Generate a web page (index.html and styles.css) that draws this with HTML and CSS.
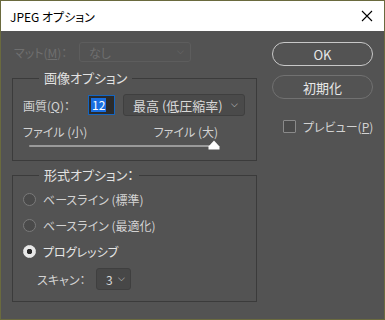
FILE: index.html
```html
<!DOCTYPE html>
<html lang="ja">
<head>
<meta charset="utf-8">
<link rel="stylesheet" href="styles.css">
</head>
<body>
<div class="window">
  <div class="titlebar">
    <span class="title">JPEG オプション</span>
    <svg class="close" width="12" height="12" viewBox="0 0 12 12"><path d="M1 1L11 11M11 1L1 11" stroke="#000" stroke-width="1.1" fill="none"/></svg>
  </div>
  <div class="body">
    <div class="left">
      <div class="matte-row">
        <span class="matte-label">マット(<u>M</u>)：</span>
        <div class="select disabled"><span>なし</span><span class="chev">⌵</span></div>
      </div>
      <fieldset class="group g1">
        <legend>画像オプション</legend>
        <div class="quality-row">
          <span class="qlabel">画質(<u>Q</u>)：</span>
          <div class="qinput"><span class="sel">12</span></div>
          <div class="select qsel"><span>最高 (低圧縮率)</span><span class="chev">⌵</span></div>
        </div>
        <div class="slider-labels"><span>ファイル (小)</span><span>ファイル (大)</span></div>
        <div class="slider">
          <div class="track"></div>
          <svg class="thumb" width="12" height="10" viewBox="0 0 12 10"><path d="M6 0.5L11.5 6.5V9.5H0.5V6.5Z" fill="#fff"/></svg>
        </div>
      </fieldset>
      <fieldset class="group g2">
        <legend>形式オプション：</legend>
        <div class="radio"><span class="dot"></span><span>ベースライン (標準)</span></div>
        <div class="radio"><span class="dot"></span><span>ベースライン (最適化)</span></div>
        <div class="radio on"><span class="dot"></span><span class="bright">プログレッシブ</span></div>
        <div class="scan-row">
          <span>スキャン：</span>
          <div class="select scan"><span>3</span><span class="chev">⌵</span></div>
        </div>
      </fieldset>
    </div>
    <div class="right">
      <div class="btn primary">OK</div>
      <div class="btn">初期化</div>
      <div class="check"><span class="box"></span><span>プレビュー(<u>P</u>)</span></div>
    </div>
  </div>
</div>
</body>
</html>
```
FILE: styles.css
```css
* { box-sizing: border-box; }
html, body { margin: 0; padding: 0; }
body {
  width: 385px; height: 320px; overflow: hidden;
  font-family: "Noto Sans CJK JP", "Noto Sans", sans-serif;
  font-size: 12px;
  white-space: nowrap;
  font-feature-settings: "palt";
}
.window {
  width: 385px; height: 320px;
  border: 1px solid #6a6a3e;
  background: #535353;
  display: flex; flex-direction: column;
}
.titlebar {
  height: 30px; background: #fff; color: #000;
  display: flex; align-items: center; justify-content: space-between;
  padding: 0 11px 0 9px;
  flex-shrink: 0;
}
.title { font-size: 12px; }
.body {
  display: flex; padding: 11px 11px 0 11px; color: #d2d2d2;
}
.left { width: 245px; flex-shrink: 0; }
.right { margin-left: auto; width: 101px; display: flex; flex-direction: column; }
u { text-decoration: underline; text-underline-offset: 1px; }

.matte-row { display: flex; align-items: center; height: 20px; }
.matte-label { width: 67px; flex-shrink: 0; padding-left: 2px; color: #6f6f6f; }
.select {
  display: flex; align-items: center; justify-content: space-between;
  border: 1px solid #3f3f3f; border-radius: 3px; background: #4a4a4a;
  padding: 0 6px 0 9px; height: 22px; color: #d8d8d8; flex-shrink: 0;
}
.select.disabled { width: 112px; height: 20px; background: #535353; border-color: #5d5d5d; color: #6f6f6f; }
.chev { font-size: 9px; line-height: 1; transform: translateY(-2px); }

.group {
  margin: 0; border: 1px solid #3b3b3b; padding: 0;
  min-width: 0;
}
.group legend {
  margin-left: 16px; padding: 0 5px; font-size: 13px; color: #e2e2e2; line-height: 14px;
}
.g1 { margin-top: 9px; height: 90px; padding: 9px 10px 0 10px; }
.quality-row { display: flex; align-items: center; height: 22px; }
.qlabel { width: 65px; flex-shrink: 0; }
.qinput {
  width: 27px; height: 20px; border: 1px solid #1565c0; background: #2b2b2b;
  display: flex; align-items: center; padding-left: 2px; flex-shrink: 0;
}
.qinput .sel { background: #1a6ee0; color: #fff; line-height: 14px; padding: 0 1px; }
.qsel { margin-left: 8px; width: 122px; font-size: 13px; }
.slider-labels { display: flex; justify-content: space-between; padding-right: 28px; margin-top: 9px; line-height: 14px; font-size: 12px; }
.slider { position: relative; height: 12px; margin: 0 32px 0 6px; }
.track { position: absolute; left: 0; right: 0; top: 6px; height: 2px; background: #9a9a9a; border-radius: 1px; }
.thumb { position: absolute; right: -6px; top: 1px; }

.g2 { margin-top: 7px; height: 134px; padding: 8px 10px 0 10px; }
.radio { display: flex; align-items: center; height: 18px; margin-bottom: 8px; gap: 7px; }
.dot {
  width: 13px; height: 13px; border-radius: 50%; border: 1px solid #7a7a7a; background: #4a4a4a;
  display: inline-block; flex-shrink: 0;
}
.radio.on .dot { border-color: #e8e8e8; background: radial-gradient(circle, #2a2a2a 0 2.5px, #e8e8e8 3px); }
.bright { color: #e6e6e6; }
.scan-row { display: flex; align-items: center; margin-top: 2px; padding-left: 14px; height: 22px; }
.scan-row > span { width: 59px; flex-shrink: 0; }
.select.scan { width: 35px; padding: 0 5px 0 9px; background: #474747; }

.btn {
  height: 24px; border: 1.5px solid #c8c8c8; border-radius: 12px;
  display: flex; align-items: center; justify-content: center; color: #e8e8e8; font-size: 13px;
}
.btn + .btn { margin-top: 9px; border: 1px solid #717171; }
.check { display: flex; align-items: center; gap: 7px; margin-top: 19px; padding-left: 11px; }
.box { width: 13px; height: 13px; border: 1px solid #8a8a8a; background: #4a4a4a; border-radius: 1px; flex-shrink: 0; }
```
